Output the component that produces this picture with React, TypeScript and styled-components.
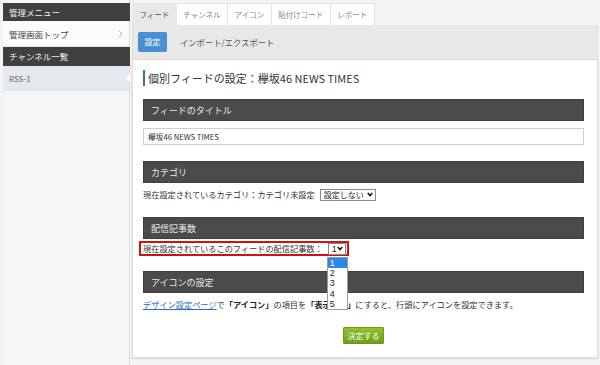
import React from "react";
import styled, { createGlobalStyle } from "styled-components";

const Global = createGlobalStyle`
  html, body { margin: 0; padding: 0; }
  body {
    background: #f4f4f4;
    font-family: "Noto Sans CJK JP", "Noto Sans", sans-serif;
    color: #333;
  }
  * { box-sizing: border-box; }
`;

const Page = styled.div`
  display: flex;
  min-height: 365px;
  padding: 3px 3px 0 3px;
  gap: 2px;
`;

const Sidebar = styled.aside`
  width: 127px;
  flex: none;
  background: #f6f6f6;
  border-right: 1px solid #dedede;
  margin-top: -3px;
  padding-top: 3px;
`;

const SideHeader = styled.div<{ $h: number }>`
  height: ${(p) => p.$h}px;
  background: #404040;
  color: #f0f0f0;
  font-size: 8.5px;
  line-height: ${(p) => p.$h}px;
  padding-left: 6px;
  margin-right: -1px;
`;

const SideRow = styled.div<{ $active?: boolean; $h: number }>`
  position: relative;
  display: flex;
  align-items: center;
  justify-content: space-between;
  height: ${(p) => p.$h}px;
  padding: 0 6px 0 6px;
  font-size: ${(p) => (p.$active ? 8 : 8.5)}px;
  color: ${(p) => (p.$active ? "#666" : "#444")};
  background: ${(p) => (p.$active ? "#e4e9f0" : "#fbfbfb")};
  border-bottom: 1px solid #e6e6e6;
  ${(p) =>
    p.$active &&
    `
    &::after {
      content: "";
      position: absolute;
      right: -1px;
      top: 50%;
      margin-top: -4px;
      border-right: 4px solid #fff;
      border-top: 4px solid transparent;
      border-bottom: 4px solid transparent;
    }
  `}
`;

const Main = styled.main`
  width: 466px;
  flex: none;
  display: flex;
  flex-direction: column;
`;

const Tabs = styled.nav`
  display: flex;
  height: 22px;
`;

const Tab = styled.div<{ $active?: boolean }>`
  padding: 0 6.5px;
  height: 22px;
  line-height: 22px;
  font-size: 7.5px;
  color: ${(p) => (p.$active ? "#555" : "#8a8a8a")};
  background: ${(p) => (p.$active ? "#e8e8e8" : "#fff")};
  border: 1px solid ${(p) => (p.$active ? "#e8e8e8" : "#e2e2e2")};
  border-bottom: none;
  & + & { border-left: none; }
`;

const SubBar = styled.div`
  height: 35px;
  background: #e8e8e8;
  border: 1px solid #dcdcdc;
  border-top: none;
  display: flex;
  align-items: center;
  padding-left: 5px;
  gap: 13px;
`;

const BlueButton = styled.div`
  width: 29px;
  height: 20px;
  background: #4a8fd2;
  border-radius: 2px;
  color: #fff;
  font-size: 8px;
  line-height: 20px;
  text-align: center;
`;

const SubLink = styled.span`
  font-size: 8.3px;
  color: #555;
`;

const Panel = styled.section`
  background: #fff;
  border: 1px solid #dedede;
  border-top: none;
  box-shadow: 0 1px 2px rgba(0, 0, 0, 0.12);
  padding: 10px 13px 13px 10px;
  display: flex;
  flex-direction: column;
`;

const Heading = styled.h2`
  margin: 0 0 13px 0;
  height: 16px;
  line-height: 16px;
  font-size: 11px;
  font-weight: normal;
  color: #333;
  border-left: 2px solid #2b78b6;
  padding-left: 3px;
`;

const SectionHeader = styled.h3`
  margin: 16px 0 0 0;
  height: 22px;
  line-height: 22px;
  background: #4b4b4b;
  border: 1px solid #3e3e3e;
  color: #eaeaea;
  font-size: 9px;
  font-weight: normal;
  padding-left: 7px;
  ${Heading} + & { margin-top: 0; }
`;

const TextInput = styled.div`
  margin-top: 7px;
  height: 17px;
  border: 1px solid #cfcfcf;
  font-size: 7.7px;
  line-height: 15px;
  padding-left: 4px;
  color: #333;
`;

const Row = styled.div<{ $mt: number }>`
  margin-top: ${(p) => p.$mt}px;
  display: flex;
  align-items: center;
  font-size: 8.2px;
  line-height: 13px;
  height: 13px;
  color: #333;
  white-space: nowrap;
`;

const SelectBox = styled.div<{ $w: number }>`
  position: relative;
  display: flex;
  align-items: center;
  justify-content: space-between;
  width: ${(p) => p.$w}px;
  height: 12px;
  border: 1px solid #8a8a8a;
  background: #fff;
  padding: 0 2px 0 3px;
  font-size: 8px;
  line-height: 10px;
  color: #222;
  margin-left: 5px;
`;

const Digit = styled.span`
  font-family: "Liberation Sans", Arial, sans-serif;
  font-size: 9px;
`;

const Highlight = styled.div`
  margin-left: -4px;
  display: flex;
  align-items: center;
  height: 15px;
  border: 2px solid #d40f0f;
  padding: 0 1px 0 2px;
`;

const DropList = styled.ul`
  position: absolute;
  left: -2px;
  top: 13px;
  width: 21px;
  margin: 0;
  padding: 0;
  list-style: none;
  background: #fff;
  border: 1px solid #9a9a9a;
  z-index: 5;
`;

const DropItem = styled.li<{ $sel?: boolean }>`
  height: 10.4px;
  line-height: 10.4px;
  font-family: "Liberation Sans", Arial, sans-serif;
  font-size: 9px;
  padding-left: 2px;
  color: ${(p) => (p.$sel ? "#fff" : "#222")};
  background: ${(p) => (p.$sel ? "#2f88e8" : "#fff")};
`;

const Link = styled.a`
  color: #2a6ac0;
  text-decoration: underline;
`;

const Strong = styled.b`
  font-weight: bold;
  color: #222;
`;

const Submit = styled.div`
  align-self: center;
  margin-top: 16px;
  width: 41px;
  height: 17px;
  line-height: 15px;
  text-align: center;
  font-size: 8px;
  color: #fff;
  background: linear-gradient(#8fc22b, #6f9f14);
  border: 1px solid #6b9a12;
  border-radius: 1px;
`;

const Chevron = () => (
  <svg width="6" height="5" viewBox="0 0 6 5">
    <polyline points="0.7,1 3,3.6 5.3,1" fill="none" stroke="#111" strokeWidth="1.5" />
  </svg>
);

const RightArrow = () => (
  <svg width="5" height="8" viewBox="0 0 5 8">
    <polyline points="0.8,0.8 4,4 0.8,7.2" fill="none" stroke="#aaa" strokeWidth="0.9" />
  </svg>
);

export default function App() {
  return (
    <>
      <Global />
      <Page>
        <Sidebar>
          <SideHeader $h={18}>管理メニュー</SideHeader>
          <SideRow $h={26}>
            <span>管理画面トップ</span>
            <RightArrow />
          </SideRow>
          <SideHeader $h={19}>チャンネル一覧</SideHeader>
          <SideRow $h={25} $active>
            <span>RSS-1</span>
          </SideRow>
        </Sidebar>
        <Main>
          <Tabs>
            <Tab $active>フィード</Tab>
            <Tab>チャンネル</Tab>
            <Tab>アイコン</Tab>
            <Tab>貼付けコード</Tab>
            <Tab>レポート</Tab>
          </Tabs>
          <SubBar>
            <BlueButton>設定</BlueButton>
            <SubLink>インポート/エクスポート</SubLink>
          </SubBar>
          <Panel>
            <Heading>個別フィードの設定：欅坂46 NEWS TIMES</Heading>
            <SectionHeader>フィードのタイトル</SectionHeader>
            <TextInput>欅坂46 NEWS TIMES</TextInput>
            <SectionHeader>カテゴリ</SectionHeader>
            <Row $mt={5}>
              現在設定されているカテゴリ：カテゴリ未設定
              <SelectBox $w={56}>
                <span>設定しない</span>
                <Chevron />
              </SelectBox>
            </Row>
            <SectionHeader>配信記事数</SectionHeader>
            <Row $mt={3}>
              <Highlight>
                現在設定されているこのフィードの配信記事数：
                <SelectBox $w={18}>
                  <Digit>1</Digit>
                  <Chevron />
                  <DropList>
                    <DropItem $sel>1</DropItem>
                    <DropItem>2</DropItem>
                    <DropItem>3</DropItem>
                    <DropItem>4</DropItem>
                    <DropItem>5</DropItem>
                  </DropList>
                </SelectBox>
              </Highlight>
            </Row>
            <SectionHeader>アイコンの設定</SectionHeader>
            <Row $mt={5}>
              <Link>デザイン設定ページ</Link>で<Strong>「アイコン」</Strong>の項目を
              <Strong>「表示する」</Strong>にすると、行頭にアイコンを設定できます。
            </Row>
            <Submit>決定する</Submit>
          </Panel>
        </Main>
      </Page>
    </>
  );
}
